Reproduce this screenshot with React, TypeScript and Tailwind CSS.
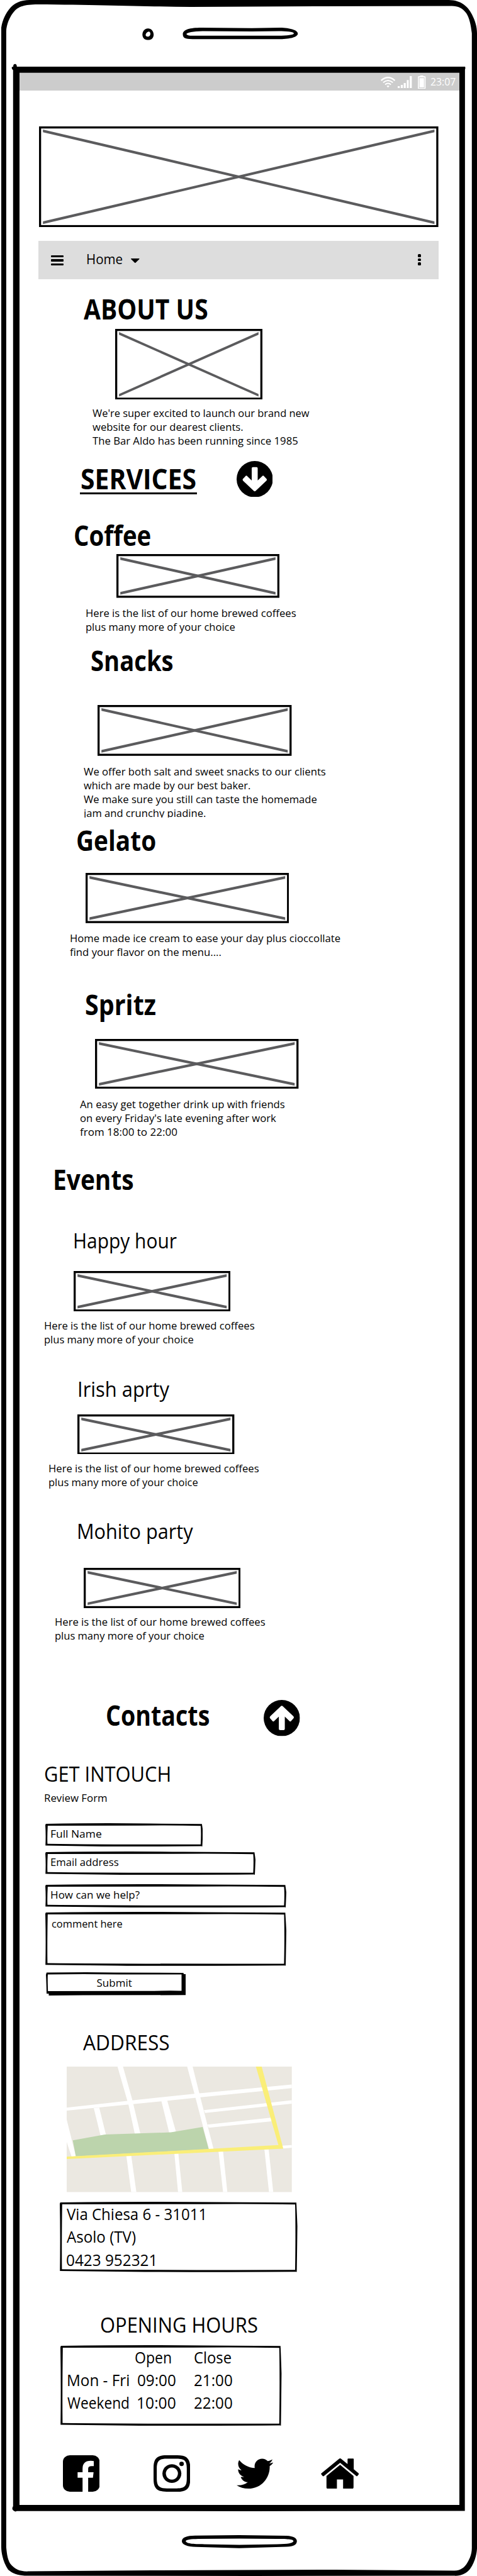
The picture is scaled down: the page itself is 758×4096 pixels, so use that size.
import { useLayoutEffect, useRef, useState } from "react";
import type { ReactNode } from "react";
import { FaTwitter } from "react-icons/fa";

/** One line of text, condensed or stretched to the width of its box. */
function Line({ children, className = "" }: { children: ReactNode; className?: string }) {
  const box = useRef<HTMLDivElement>(null);
  const text = useRef<HTMLSpanElement>(null);
  const [ratio, setRatio] = useState(1);
  useLayoutEffect(() => {
    if (box.current && text.current && text.current.offsetWidth > 0) {
      setRatio(box.current.clientWidth / text.current.offsetWidth);
    }
  }, [children]);
  return (
    <div ref={box} className={"shrink-0 whitespace-pre " + className}>
      <span ref={text} className="inline-block origin-left align-top" style={{ transform: `scaleX(${ratio})` }}>
        {children}
      </span>
    </div>
  );
}

function Title({ children, className }: { children: string; className: string }) {
  return <Line className={"h-[50px] text-[44px] leading-[50px] font-bold " + className}>{children}</Line>;
}

function Subtitle({ children, className }: { children: string; className: string }) {
  return <Line className={"h-[40px] text-[33px] leading-[40px] " + className}>{children}</Line>;
}

function Paragraph({ children, className }: { children: ReactNode; className: string }) {
  return <div className={"flex shrink-0 flex-col text-[17px] leading-[22px] " + className}>{children}</div>;
}

function Brewed({ className }: { className: string }) {
  return (
    <Paragraph className={className}>
      <Line className="w-[335px]">Here is the list of our home brewed coffees</Line>
      <Line className="w-[238px]">plus many more of your choice</Line>
    </Paragraph>
  );
}

function Placeholder({ w, h, className }: { w: number; h: number; className: string }) {
  return (
    <svg className={"block shrink-0 " + className} width={w} height={h} viewBox={`0 0 ${w} ${h}`}>
      <rect x="1.65" y="1.65" width={w - 3.3} height={h - 3.3} fill="#fff" stroke="#000" strokeWidth="3.3" />
      <polygon fill="#5b5b5d" points={`6.2,5 ${w - 6.2},${h - 9.2} ${w - 6.2},${h - 5} 6.2,9.2`} />
      <polygon fill="#5b5b5d" points={`${w - 6.2},5 6.2,${h - 9.2} 6.2,${h - 5} ${w - 6.2},9.2`} />
    </svg>
  );
}

function SketchBox({ w, h, className, children }: { w: number; h: number; className: string; children: ReactNode }) {
  return (
    <div className={"relative shrink-0 " + className}>
      <svg className="absolute inset-0" width={w} height={h} viewBox={`0 0 ${w} ${h}`}>
        <path
          fillRule="evenodd"
          d={`M0.8 0.9 Q${w * 0.4} -0.6 ${w * 0.66} 0.6 L${w - 1.6} 1.2 Q${w - 0.6} ${h * 0.2} ${w} ${h * 0.35} Q${w - 0.6} ${h * 0.8} ${w - 1} ${h - 0.2} L${w - 2.6} ${h - 0.5} Q${w * 0.5} ${h + 0.4} ${w * 0.3} ${h - 0.4} L0.2 ${h - 1.6} Q1 ${h * 0.5} 0 3 Z
             M3.8 4 Q2.9 ${h * 0.6} 3.4 ${h - 4.4} Q${w * 0.4} ${h - 3} ${w - 3.6} ${h - 3.4} Q${w - 2.6} ${h * 0.4} ${w - 3.6} 4.2 Q${w * 0.8} 3 ${w * 0.6} 3.8 Z`}
        />
      </svg>
      <div className="relative flex flex-col">{children}</div>
    </div>
  );
}

function CircleArrow({ className = "" }: { className?: string }) {
  return (
    <svg className={"block h-[57.6px] w-[57.6px] shrink-0 " + className} viewBox="0 0 57.6 57.6">
      <circle cx="28.8" cy="28.8" r="28.8" />
      <path
        fill="#fff"
        d="M24 11.6 Q24 9.7 26 9.7 H31.6 Q33.5 9.7 33.5 11.6 V31 L40.6 24.3 Q42 22.4 43.6 24.2 L47.6 28.6 Q48.6 30 47.2 31.6 L30.6 47.3 Q28.8 49.2 27 47.3 L10.3 31.6 Q9 30 10 28.6 L14 24.2 Q15.5 22.4 17 24.3 L24 31 Z"
      />
    </svg>
  );
}

function PhoneFrame() {
  return (
    <svg className="pointer-events-none absolute inset-0" width="758" height="4096" viewBox="0 0 758 4096">
      <path
        fillRule="evenodd"
        d="M47 0 H713 C733 0 744 11 750 23 C755 33 758 42 758 53 V4052 C757.6 4062 754 4075 747 4084.7 C741 4092 733 4096 722 4095.6 L400 4096 L39 4095.4 C28 4094.6 20 4092 13 4086 C6 4076 2 4061 2 4050 V44 C4 31 9 22 14.500 14.700 C22 5 33 0 47 0 Z
           M60 7 C38 7 30 11 24 16.500 C15 26 10 40 9.900 50 V4050 C11 4062 12 4069 16 4076 C23 4085 31 4089 45 4088.600 L242 4087 L532 4086 L722 4087.600 C733 4087 738 4082 742 4076 C747 4068 750 4060 749.800 4050 V53 C748 38 746 29 741 21 C735 13 728 9.600 718 9.500 L500 10.100 L303 11 C230 10.400 160 7.800 60 7 Z"
      />
      <path
        fillRule="evenodd"
        d="M21 106.100 C21 103 22 101.800 24 101.800 C25.800 101.800 26.800 103.500 26.800 106 L739 105.900 Q740 108 738.900 110.800 L738.700 3992.600 L400 3992.900 L26.500 3992.700 Q24.500 3994.500 21.400 3992 Q18 3989.500 20.800 3985 V111.500 Q17.800 109 19 106.500 Z
           M31 115.800 V3982.900 H730 V115.800 Z"
      />
      <path
        fillRule="evenodd"
        d="M235 45.200 C240 45 244 49 244.200 55 C244 61 240.500 63.500 235.500 63.500 C230 63.500 226.500 61 226.300 55 C226.600 49 230 45.500 235 45.200 Z M236.500 50.200 C233.500 50.500 231 54 231.600 56.500 C232.500 58.800 236 58.600 237.800 57 C239.600 55 239.500 50.600 236.500 50.200 Z"
      />
      <path
        fillRule="evenodd"
        d="M290.500 54 C291 47 302 44.200 320 44.100 L400 44.700 L445 44.100 C461 44.500 473.300 48 473.300 53.500 C473 59 460 62.300 445 62.200 H306 C294 62.200 290.500 60.500 290.500 54 Z M296.300 54 C297 56.500 302 57 310 56.700 H442 C456 56.700 467 55.500 467 53 C466 50.500 455 49.700 443 49.600 L400 50.100 L322 49.500 C307 49.800 297 52 296.300 54 Z"
      />
      <path
        fillRule="evenodd"
        d="M289 4040.500 C289.500 4034.500 297 4031.900 310 4031.800 L380 4031 L455 4031.900 C467 4032.300 471.800 4036 471.800 4040.500 C471.600 4046 467 4049.300 455 4049.500 L380 4051.800 L312 4049.800 C297 4049.500 289 4046 289 4040.500 Z M295 4040.500 C297 4044.500 305 4045.300 325 4045.400 L380 4046.500 L440 4045.400 C458 4045.300 465 4044 466.400 4040.600 C466 4037.500 460 4037.200 440 4036.900 L380 4036.500 L315 4037 C303 4037.400 296 4038 295 4040.500 Z"
      />
    </svg>
  );
}

function StatusBar() {
  return (
    <div className="ml-[31px] flex h-[28px] w-[699px] shrink-0 items-start bg-[#ccc] pl-[574px] text-white">
      <svg className="mt-[5.500px] h-[17.200px] w-[23.200px] shrink-0" viewBox="320 162 100 74" preserveAspectRatio="none" fill="none" stroke="#fff">
        <path strokeWidth="10" d="M323 188 Q370 147 417 188" />
        <path strokeWidth="9" d="M337 202 Q370 174 403 202" />
        <path strokeWidth="8.500" d="M350 216 Q370 198 390 216" />
        <path fill="#fff" stroke="none" d="M360 226 Q370 219 380 226 L372 234 Q370 236 368 234 Z" />
      </svg>
      <svg className="mt-[4.800px] ml-[4px] h-[19px] w-[22.400px] shrink-0" viewBox="438 159 96 82" preserveAspectRatio="none" fill="#fff">
        <path d="M438 228h14v13h-14z M459 219h14v22h-14z M479 207h14v34h-14z M500 186h13v55h-13z M520 159h14v82h-14z" />
      </svg>
      <svg className="mt-[3.500px] ml-[9.700px] h-[21.600px] w-[12.300px] shrink-0" viewBox="575 153 53 93" preserveAspectRatio="none">
        <path fill="#fff" fillRule="evenodd" d="M576 162 Q576 158 580 158 H590 Q590 153 594 153 H609 Q613 153 613 158 H623 Q628 158 628 162 V241 Q628 246 623 246 H580 Q575 246 575 241 Z M582 166 V239 H621 V166 Z" />
        <path fill="#fff" d="M586 171h31v64h-31z" />
      </svg>
      <Line className="mt-[3.300px] ml-[7.500px] h-[22px] w-[40px] text-[17px] leading-[22px]">23:07</Line>
    </div>
  );
}

function NavBar() {
  return (
    <nav className="mt-[22px] ml-[61.400px] flex h-[61px] w-[635.200px] shrink-0 items-start bg-[#ddd]">
      <div className="mt-[22.600px] ml-[19.300px] flex w-[20px] flex-col gap-[3px]">
        <div className="h-[3.500px] rounded-[1px] bg-black" />
        <div className="h-[3.500px] rounded-[1px] bg-black" />
        <div className="h-[3.500px] rounded-[1px] bg-black" />
      </div>
      <Line className="mt-[13.200px] ml-[36.500px] h-[30px] w-[58px] text-[22px] leading-[30px]">Home</Line>
      <svg className="mt-[27.600px] ml-[13.200px] h-[7.200px] w-[13.600px]" viewBox="0 0 28 24" preserveAspectRatio="none">
        <path d="M1 0 H27 Q29 1 27 4 L16 22 Q14 25 12 22 L1 4 Q-1 1 1 0Z" />
      </svg>
      <div className="mt-[21px] ml-[442px] flex w-[5.200px] flex-col gap-[1.700px]">
        <div className="h-[4.800px] rounded-[1.500px] bg-black" />
        <div className="h-[4.800px] rounded-[1.500px] bg-black" />
        <div className="h-[4.800px] rounded-[1.500px] bg-black" />
      </div>
    </nav>
  );
}

function StreetMap() {
  return (
    <svg className="mt-[18.500px] ml-[105.900px] block h-[199.500px] w-[357.700px] shrink-0" viewBox="219 309 740 700" preserveAspectRatio="none">
      <rect x="219" y="309" width="740" height="700" fill="#ebe8e1" />
      <g fill="#fff">
        <polygon points="219,538 419,500 639,461 959,409 959,429 660,480 435,519 219,555" />
        <polygon points="386,309 404,309 435,497 461,683 443,685 422,521" />
        <polygon points="615,309 633,309 655,458 702,770 687,772 639,461" />
        <polygon points="308,541 326,538 348,690 330,692" />
        <polygon points="530,499 549,495 578,672 556,678" />
        <polygon points="670,552 959,497 959,516 674,568" />
        <polygon points="681,633 890,594 893,614 686,650" />
        <polygon points="219,605 249,809 235,812 219,730" />
        <polygon points="928,750 959,747 959,762 928,766" />
        <polygon points="415,806 431,804 448,1009 431,1009" />
        <polygon points="573,795 586,793 599,1009 585,1009" />
        <polygon points="718,782 733,781 747,1009 733,1009" />
        <polygon points="869,771 883,770 898,1009 884,1009" />
      </g>
      <polygon fill="#bcd4ac" points="239,720 345,688 562,676 666,646 686,770 249,810" />
      <polygon fill="#faee78" points="219,812 915,747 841,309 860,309 931,767 219,825" />
    </svg>
  );
}

function SocialIcons() {
  return (
    <div className="mt-[47px] ml-[100px] flex h-[58px] shrink-0 items-start">
      <svg className="h-[58px] w-[58.300px] shrink-0" viewBox="91 93 170 249" preserveAspectRatio="none">
        <rect x="91" y="93" width="170" height="249" rx="32" ry="44" />
        <path fill="#fff" d="M182 343 V246 H159 V209 H182 V184 Q182 132 220 131 Q230 131 234 133 V167 H224 Q208 167 208 184 V209 H233 L230 246 H208 V343 Z" />
      </svg>
      <svg className="ml-[85.800px] h-[58px] w-[58.300px] shrink-0" viewBox="516 93 170 249" preserveAspectRatio="none">
        <path fillRule="evenodd" d="M576 93 H626 C670 93 686 116 686 180 V255 C686 319 670 342 626 342 H576 C532 342 516 319 516 255 V180 C516 116 532 93 576 93 Z M578 117 C542 117 531 131 531 184 V251 C531 304 542 319 578 319 H624 C660 319 670 304 670 251 V184 C670 131 660 117 624 117 Z" />
        <path fillRule="evenodd" d="M601 154 A44 64 0 1 1 600.900 154 Z M601 177 A28 41 0 1 0 601.100 177 Z" />
        <ellipse cx="646" cy="152" rx="10.500" ry="15" />
      </svg>
      <FaTwitter className="ml-[73.300px] h-[58.600px] w-[58.600px] shrink-0" />
      <svg className="mt-[4.700px] ml-[75.400px] h-[48.200px] w-[60.600px] shrink-0" viewBox="1300 113 179 208" preserveAspectRatio="none">
        <path d="M1384 117 Q1390 110 1396 117 L1425 152 V118 Q1425 114 1428 114 H1451 Q1454 114 1454 118 V187 L1477 215 Q1480 219 1477 223 L1471 234 Q1468 238 1466 234 L1390 143 L1314 234 Q1311 238 1308 234 L1302 223 Q1299 219 1302 215 Z" />
        <path d="M1390 157 L1453 234 V312 Q1453 321 1447 321 H1404 V258 H1375 V321 H1332 Q1326 321 1326 312 V234 Z" />
      </svg>
    </div>
  );
}

export default function App() {
  return (
    <div className="relative flex h-[4096px] w-[758px] flex-col overflow-hidden bg-white pt-[116px] font-['Open_Sans','Noto_Sans',sans-serif] text-black">
      <StatusBar />
      <Placeholder w={634.6} h={160.2} className="mt-[57px] ml-[62px]" />
      <NavBar />

      <Title className="mt-[22px] ml-[133px] w-[198px]">ABOUT US</Title>
      <Placeholder w={234} h={112.6} className="mt-[6.400px] ml-[183.200px]" />
      <Paragraph className="mt-[10.900px] ml-[146.500px] h-[65.600px]">
        <Line className="w-[345px]">We're super excited to launch our brand new</Line>
        <Line className="w-[240px]">website for our dearest clients.</Line>
        <Line className="w-[327px]">The Bar Aldo has been running since 1985</Line>
      </Paragraph>

      <div className="mt-[21.100px] ml-[127.200px] flex h-[57.600px] shrink-0 items-start">
        <div className="mt-[3.400px] w-[186px] border-b-3 border-black">
          <Title className="-mb-[3px] ml-[1px] w-[184px]">SERVICES</Title>
        </div>
        <CircleArrow className="ml-[62.500px]" />
      </div>

      <Title className="mt-[35.200px] ml-[117px] w-[122.500px]">Coffee</Title>
      <Placeholder w={259} h={69.5} className="mt-[5.900px] ml-[184.700px]" />
      <Brewed className="mt-[13.300px] ml-[136px] h-[44px]" />

      <Title className="mt-[16.700px] ml-[143.500px] w-[131.500px]">Snacks</Title>
      <Placeholder w={308.4} h={80.8} className="mt-[46.500px] ml-[155.200px]" />
      <Paragraph className="mt-[13.600px] ml-[132.500px] h-[84.600px] overflow-hidden">
        <Line className="w-[385px]">We offer both salt and sweet snacks to our clients</Line>
        <Line className="w-[265px]">which are made by our best baker.</Line>
        <Line className="w-[371px]">We make sure you still can taste the homemade</Line>
        <Line className="w-[194px]">jam and crunchy piadine.</Line>
      </Paragraph>

      <Title className="mt-[11.100px] ml-[120.500px] w-[127px]">Gelato</Title>
      <Placeholder w={323.4} h={79.8} className="mt-[26.700px] ml-[135.800px]" />
      <Paragraph className="mt-[13.200px] ml-[110.700px] h-[44px]">
        <Line className="w-[429.500px]">Home made ice cream to ease your day plus cioccollate</Line>
        <Line className="w-[241px]">find your flavor on the menu....</Line>
      </Paragraph>

      <Title className="mt-[47.200px] ml-[135px] w-[112.500px]">Spritz</Title>
      <Placeholder w={323.4} h={79.2} className="mt-[29.800px] ml-[151.300px]" />
      <Paragraph className="mt-[13.900px] ml-[127px] h-[65.700px]">
        <Line className="w-[326px]">An easy get together drink up with friends</Line>
        <Line className="w-[312px]">on every Friday's late evening after work</Line>
        <Line className="w-[154.500px]">from 18:00 to 22:00</Line>
      </Paragraph>

      <Title className="mt-[39.200px] ml-[83.500px] w-[128.500px]">Events</Title>

      <Subtitle className="mt-[53.100px] ml-[116.200px] w-[165px]">Happy hour</Subtitle>
      <Placeholder w={249.4} h={64.4} className="mt-[27.500px] ml-[116.500px]" />
      <Brewed className="mt-[11.500px] ml-[70px] h-[44px]" />

      <Subtitle className="mt-[48.300px] ml-[122.500px] w-[145.500px]">Irish aprty</Subtitle>
      <Placeholder w={249.4} h={63.9} className="mt-[19.700px] ml-[123.300px]" />
      <Brewed className="mt-[11.900px] ml-[77.300px] h-[44px]" />

      <Subtitle className="mt-[46.300px] ml-[122px] w-[184.700px]">Mohito party</Subtitle>
      <Placeholder w={249.4} h={64.1} className="mt-[38.100px] ml-[132.900px]" />
      <Brewed className="mt-[11.500px] ml-[87px] h-[44px]" />

      <div className="mt-[90.800px] ml-[168px] flex h-[57.600px] shrink-0 items-start">
        <Title className="-mt-[0.800px] w-[165px]">Contacts</Title>
        <CircleArrow className="ml-[85.600px] rotate-180" />
      </div>

      <Subtitle className="mt-[40px] ml-[70.300px] w-[202px]">GET INTOUCH</Subtitle>
      <Line className="mt-[7.200px] ml-[70.300px] h-[22px] w-[101px] text-[17px] leading-[22px]">Review Form</Line>

      <SketchBox w={250.5} h={37.1} className="mt-[29.100px] ml-[71.500px] h-[37.100px] text-[17px] leading-[22px]">
        <Line className="mt-[6.300px] ml-[8.600px] w-[81.500px]">Full Name</Line>
      </SketchBox>
      <SketchBox w={334} h={37.1} className="mt-[7.800px] ml-[71.500px] h-[37.100px] text-[17px] leading-[22px]">
        <Line className="mt-[6.100px] ml-[8.600px] w-[109px]">Email address</Line>
      </SketchBox>
      <SketchBox w={383} h={37.1} className="mt-[14.600px] ml-[71.500px] h-[37.100px] text-[17px] leading-[22px]">
        <Line className="mt-[6.100px] ml-[8.600px] w-[142px]">How can we help?</Line>
      </SketchBox>
      <SketchBox w={383} h={85.8} className="mt-[7.500px] ml-[71.500px] h-[85.800px] text-[17px] leading-[22px]">
        <Line className="mt-[7.900px] ml-[10.400px] w-[113px]">comment here</Line>
      </SketchBox>
      <button className="relative mt-[9.700px] ml-[72.500px] block h-[37px] w-[222px] shrink-0 text-left text-[17px] leading-[22px]">
        <svg className="absolute inset-0" width="222" height="37" viewBox="0 0 222 37">
          <path
            fillRule="evenodd"
            d="M1 0.600 Q60 -0.400 110 0.400 L218.500 1 L219 3 H222 V36.300 L60 36.600 L4.500 36.900 V34 H1 Q0.600 14 0 4 Z M3 3.500 Q2.500 10 3.200 30 L160 29.800 Q200 29 215.500 29.600 V3.600 Q120 3.600 60 3 Z"
          />
        </svg>
        <Line className="relative mt-[-2px] ml-[81px] w-[56px]">Submit</Line>
      </button>

      <Subtitle className="mt-[54.900px] ml-[131.500px] w-[137.500px]">ADDRESS</Subtitle>
      <StreetMap />
      <SketchBox w={377.6} h={111.7} className="mt-[15.400px] ml-[95.200px] h-[111.700px] text-[25px] leading-[36.400px]">
        <Line className="mt-[1.100px] ml-[11px] w-[223px]">Via Chiesa 6 - 31011</Line>
        <Line className="ml-[11px] w-[109.500px]">Asolo (TV)</Line>
        <Line className="ml-[10.200px] w-[145px]">0423 952321</Line>
      </SketchBox>

      <Subtitle className="mt-[64.600px] ml-[158.500px] w-[250.500px]">OPENING HOURS</Subtitle>
      <SketchBox w={351.4} h={128.1} className="mt-[11.500px] ml-[96.200px] h-[128.100px] text-[25px] leading-[36.200px]">
        <div className="mt-[1.200px] flex">
          <Line className="ml-[118px] w-[58.500px]">Open</Line>
          <Line className="ml-[35.200px] w-[60px]">Close</Line>
        </div>
        <div className="flex">
          <Line className="ml-[10px] w-[100px]">Mon - Fri</Line>
          <Line className="ml-[12.300px] w-[61.500px]">09:00</Line>
          <Line className="ml-[28px] w-[61.500px]">21:00</Line>
        </div>
        <div className="flex">
          <Line className="ml-[11px] w-[98.500px]">Weekend</Line>
          <Line className="ml-[11.300px] w-[62.500px]">10:00</Line>
          <Line className="ml-[28.500px] w-[61.500px]">22:00</Line>
        </div>
      </SketchBox>
      <SocialIcons />
      <PhoneFrame />
    </div>
  );
}
